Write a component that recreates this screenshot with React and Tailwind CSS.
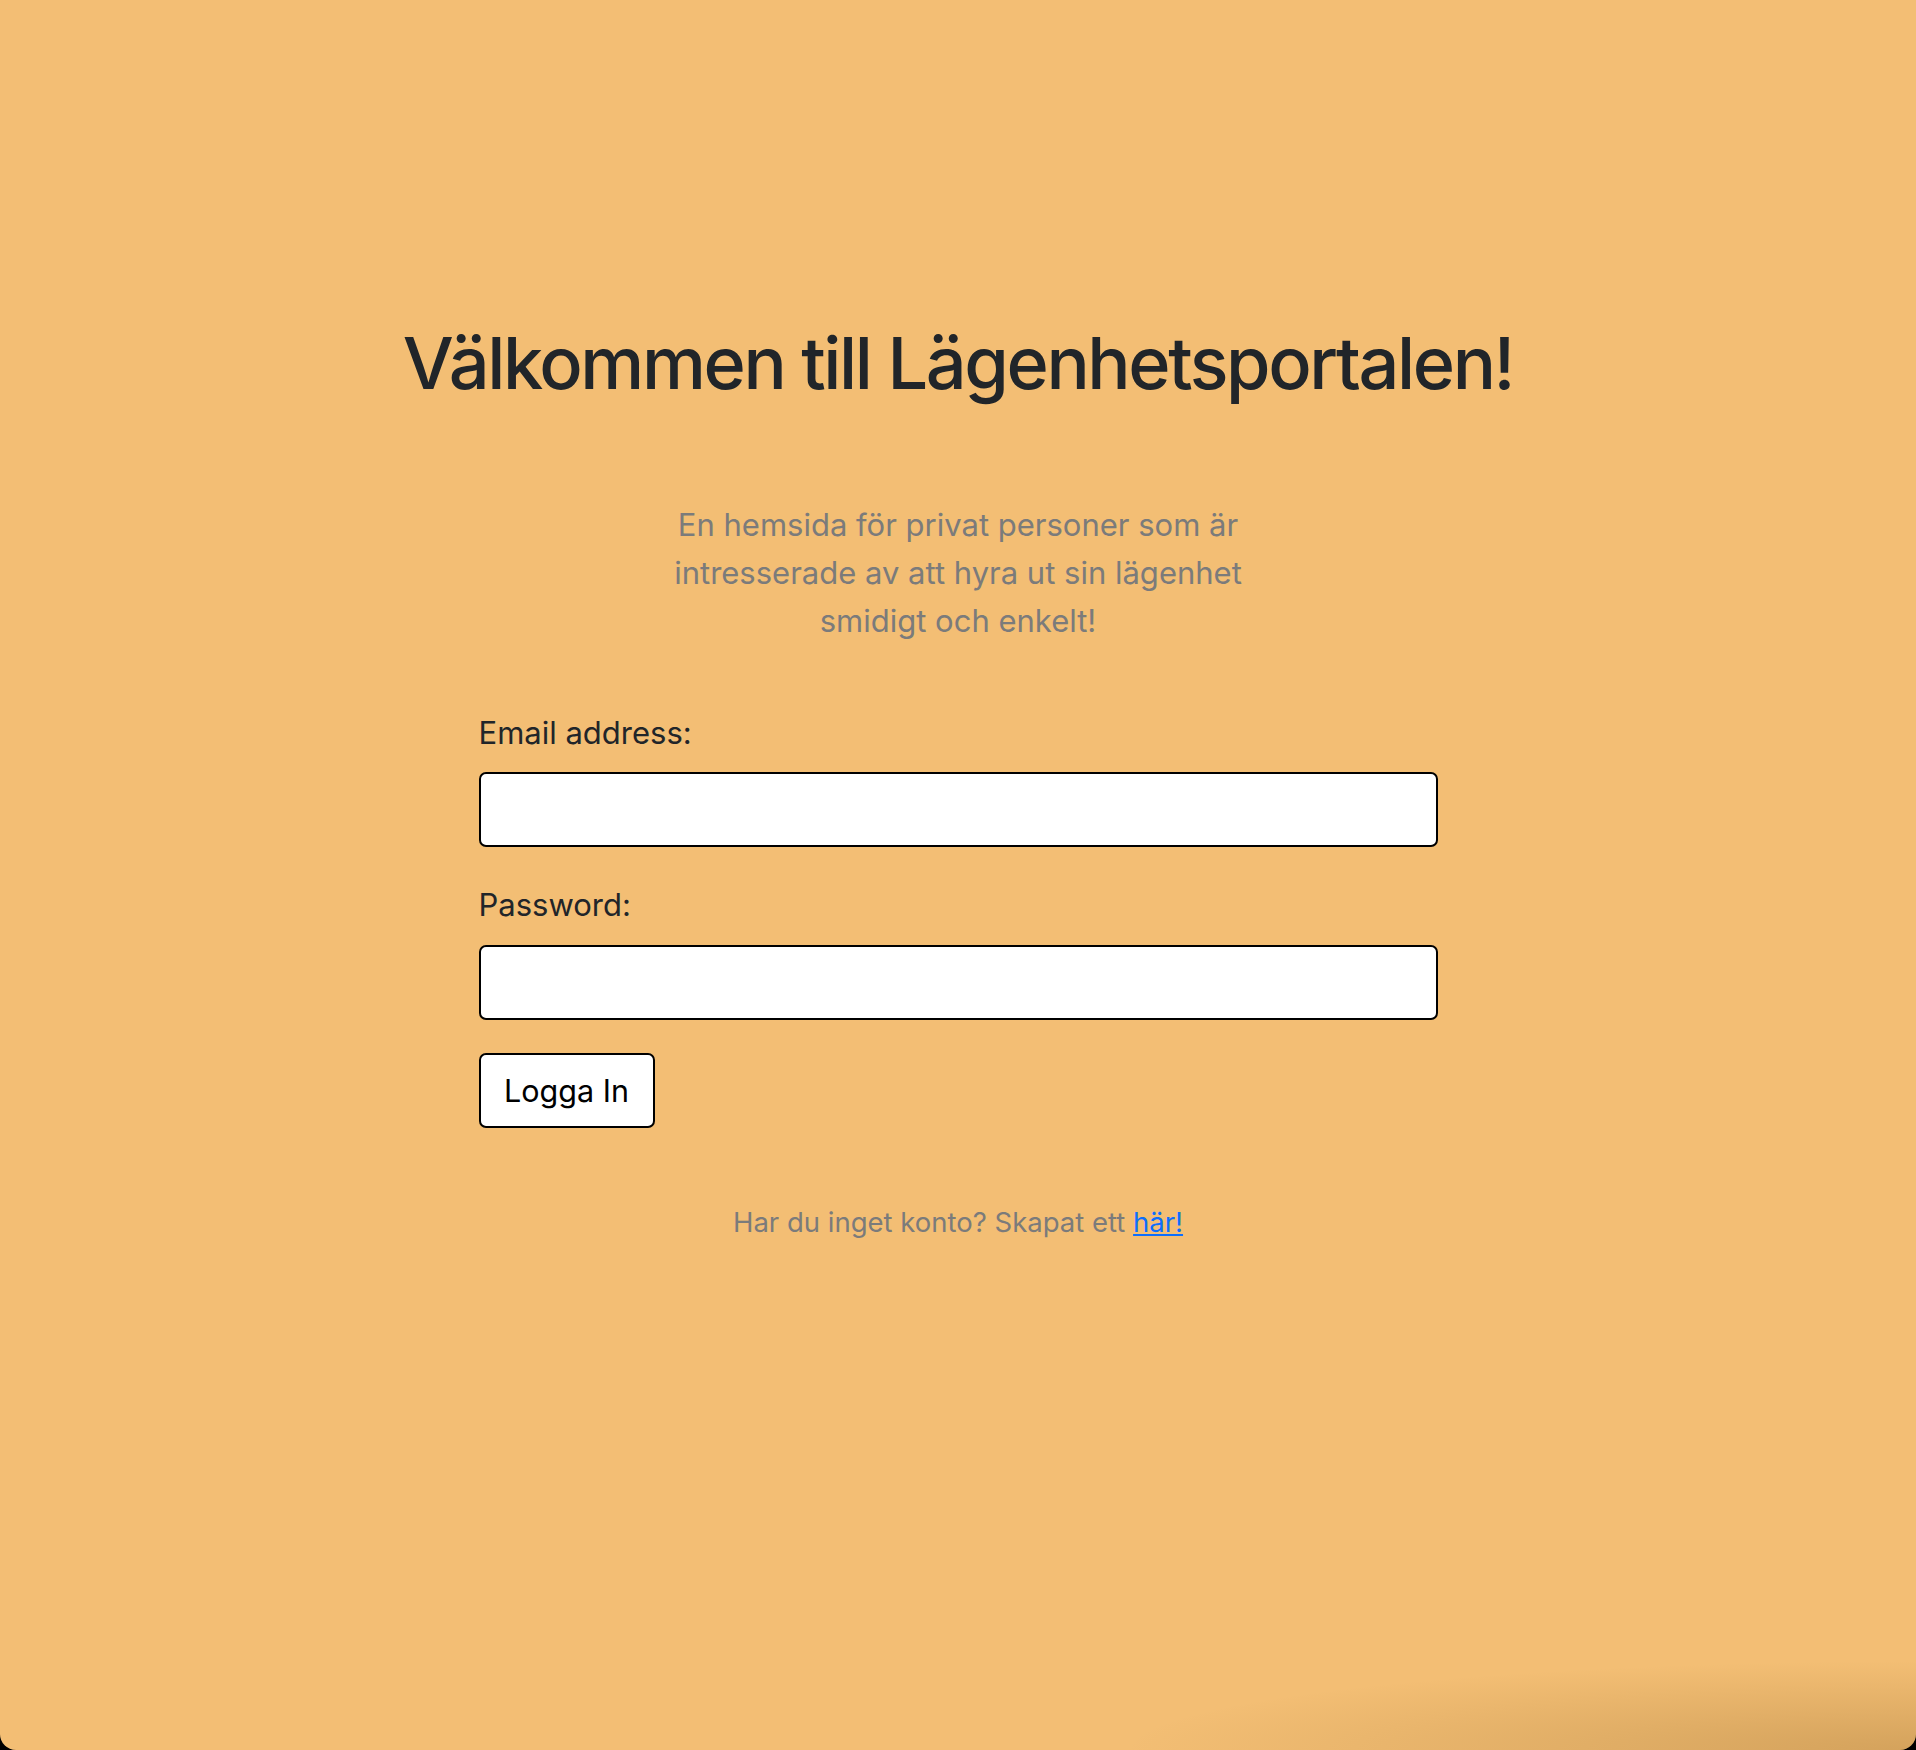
export default function App() {
  return (
    <div className="min-h-[1750px] bg-black">
      <div className="relative min-h-[1750px] overflow-hidden rounded-b-[16px] bg-[#f3be74] font-['Inter','Liberation_Sans',sans-serif]">
        <div className="mx-auto flex w-[959px] flex-col pt-[320px]">
          <h1 className="-mx-[200px] whitespace-nowrap text-center text-[72px] font-medium leading-[86px] tracking-[-0.033em] text-[#212529]">
            Välkommen till Lägenhetsportalen!
          </h1>

          <p className="mx-auto mt-[95px] w-[600px] text-center text-[31px] leading-[48px] text-[#7b7b7b]">
            En hemsida för privat personer som är intresserade av att hyra ut sin lägenhet smidigt och enkelt!
          </p>

          <form className="mt-[65px] flex flex-col" onSubmit={(e) => e.preventDefault()}>
            <label className="text-[31px] leading-[45px] text-[#212529]">Email address:</label>
            <input
              type="email"
              className="mt-[17px] h-[75px] w-full rounded-[7px] border-2 border-black bg-white px-4 text-[30px] outline-none"
            />
            <label className="mt-[35px] text-[31px] leading-[45px] text-[#212529]">Password:</label>
            <input
              type="password"
              className="mt-[18px] h-[75px] w-full rounded-[7px] border-2 border-black bg-white px-4 text-[30px] outline-none"
            />
            <div className="mt-[33px]">
              <button
                type="submit"
                className="h-[75px] w-[176px] rounded-[7px] border-2 border-black bg-white text-[30.5px] text-black"
              >
                Logga In
              </button>
            </div>
          </form>

          <p className="mt-[72px] text-center text-[27.5px] leading-[45px] text-[#7b7b7b]">
            Har du inget konto? Skapat ett{' '}
            <a href="#" className="text-[#0d6efd] underline">
              här!
            </a>
          </p>
        </div>

        {/* dock shadow in the bottom right */}
        <div className="pointer-events-none absolute bottom-0 right-0 h-[90px] w-[800px] bg-[radial-gradient(ellipse_at_bottom_right,rgba(120,80,20,0.25),rgba(120,80,20,0)_70%)]" />
      </div>
    </div>
  );
}
